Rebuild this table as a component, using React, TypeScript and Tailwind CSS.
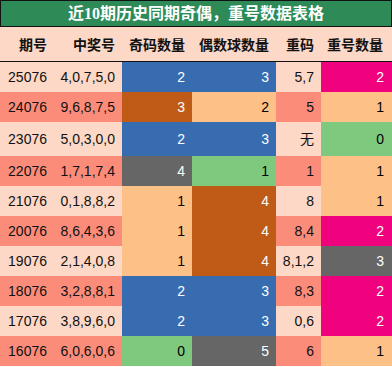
const LIGHT = "bg-[#fdd8c6]";
const SALMON = "bg-[#fc8c7a]";

const cellColor: Record<string, string> = {
  blue: "bg-[#386cb0] text-white",
  brown: "bg-[#bf5b17] text-white",
  gray: "bg-[#666666] text-white",
  pink: "bg-[#f0027f] text-white",
  peach: "bg-[#fdc086] text-black",
  green: "bg-[#7fc97f] text-black",
};

type Row = {
  issue: string;
  nums: string;
  odd: [string, string];
  even: [string, string];
  repeat: string;
  repCount: [string, string];
};

const rows: Row[] = [
  { issue: "25076", nums: "4,0,7,5,0", odd: ["2", "blue"], even: ["3", "blue"], repeat: "5,7", repCount: ["2", "pink"] },
  { issue: "24076", nums: "9,6,8,7,5", odd: ["3", "brown"], even: ["2", "peach"], repeat: "5", repCount: ["1", "peach"] },
  { issue: "23076", nums: "5,0,3,0,0", odd: ["2", "blue"], even: ["3", "blue"], repeat: "无", repCount: ["0", "green"] },
  { issue: "22076", nums: "1,7,1,7,4", odd: ["4", "gray"], even: ["1", "green"], repeat: "1", repCount: ["1", "peach"] },
  { issue: "21076", nums: "0,1,8,8,2", odd: ["1", "peach"], even: ["4", "brown"], repeat: "8", repCount: ["1", "peach"] },
  { issue: "20076", nums: "8,6,4,3,6", odd: ["1", "peach"], even: ["4", "brown"], repeat: "8,4", repCount: ["2", "pink"] },
  { issue: "19076", nums: "2,1,4,0,8", odd: ["1", "peach"], even: ["4", "brown"], repeat: "8,1,2", repCount: ["3", "gray"] },
  { issue: "18076", nums: "3,2,8,8,1", odd: ["2", "blue"], even: ["3", "blue"], repeat: "8,3", repCount: ["2", "pink"] },
  { issue: "17076", nums: "3,8,9,6,0", odd: ["2", "blue"], even: ["3", "blue"], repeat: "0,6", repCount: ["2", "pink"] },
  { issue: "16076", nums: "6,0,6,0,6", odd: ["0", "green"], even: ["5", "gray"], repeat: "6", repCount: ["1", "peach"] },
];

const cols = "grid grid-cols-[54px_68px_70px_84px_45px_71px]";

export default function App() {
  return (
    <div className="w-[392px] h-[367px] bg-white font-['Liberation_Sans','Noto_Sans_CJK_SC',sans-serif] text-[14px] text-[#111]">
      <div className="h-[27px] border border-[#111] bg-[#2e8b57] flex items-center justify-center text-white font-bold text-[16px] font-['Liberation_Serif','Noto_Sans_CJK_SC',serif]">
        近10期历史同期奇偶，重号数据表格
      </div>

      <div className={`${cols} h-[35px] ${LIGHT} border-b border-[#111] font-bold font-['Noto_Sans_CJK_SC',sans-serif]`}>
        {["期号", "中奖号", "奇码数量", "偶数球数量", "重码"].map((h) => (
          <div key={h} className="flex items-center justify-end pr-[7px]">
            {h}
          </div>
        ))}
        <div className="flex items-center justify-end pr-[9px]">重号数量</div>
      </div>

      {rows.map((r, i) => {
        const stripe = i % 2 === 0 ? LIGHT : SALMON;
        const tall = r.repeat === "无";
        return (
          <div key={r.issue} className={`${cols} ${tall ? "h-[34px]" : "h-[30px]"}`}>
            <div className={`${stripe} flex items-center justify-end pr-[7px]`}>{r.issue}</div>
            <div className={`${stripe} flex items-center justify-end pr-[7px]`}>{r.nums}</div>
            <div className={`${cellColor[r.odd[1]]} flex items-center justify-end pr-[7px]`}>{r.odd[0]}</div>
            <div className={`${cellColor[r.even[1]]} flex items-center justify-end pr-[7px]`}>{r.even[0]}</div>
            <div className={`${stripe} flex items-center justify-end pr-[7px]`}>{r.repeat}</div>
            <div className={`${cellColor[r.repCount[1]]} flex items-center justify-end pr-[8px]`}>{r.repCount[0]}</div>
          </div>
        );
      })}
    </div>
  );
}
